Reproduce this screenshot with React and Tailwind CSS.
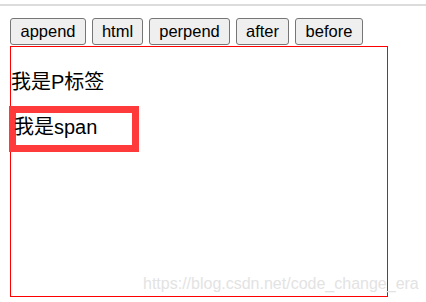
export default function App() {
  const btn =
    "h-[27px] rounded-[3px] border border-[#767676] bg-[#efefef] text-[16.5px] leading-none text-black flex items-center justify-center";
  const cjk = { fontFamily: '"Liberation Sans", "Noto Sans CJK SC", sans-serif' };
  return (
    <div className="relative w-[426px] h-[302px] bg-white overflow-hidden" style={cjk}>
      <div className="mt-[4px] h-[2px] bg-[#dcdcdc]" />
      <div className="mt-[12px] ml-[10px] flex gap-[6px]">
        <button className={`${btn} w-[76px]`}>append</button>
        <button className={`${btn} w-[51px]`}>html</button>
        <button className={`${btn} w-[81px]`}>perpend</button>
        <button className={`${btn} w-[53px]`}>after</button>
        <button className={`${btn} w-[68px]`}>before</button>
      </div>
      <div className="mt-[1px] ml-[10px] w-[378px] h-[251px] border border-[#ff0000]">
        <p className="mt-[23px] text-[20px] leading-[24px] text-black">我是P标签</p>
        <div className="mt-[12px] -ml-[2px] w-[130px] h-[46px] border-[7px] border-[#ff3a3a] bg-white">
          <div className="-ml-[2px] pt-[2px] text-[20px] leading-[24px] text-black whitespace-nowrap">我是span</div>
        </div>
      </div>
      <div className="absolute left-[143px] top-[275px] text-[16px] leading-[18px] text-[#e3e3e3] whitespace-nowrap">
        https://blog.csdn.net/code_change_era
      </div>
    </div>
  );
}
